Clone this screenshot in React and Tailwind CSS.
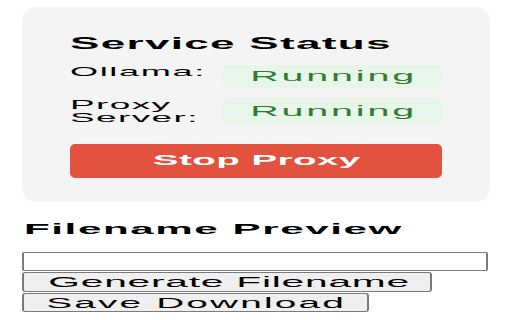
export default function App() {
  return (
    <div className="w-[512px] h-[320px] overflow-hidden bg-white text-black font-['Liberation_Sans',Arial,sans-serif]">
      <div className="mx-[22px] mt-[7px] h-[195px] rounded-[14px] bg-[#f4f4f4] pl-[48px] pr-[48px] pt-[27px]">
        <div className="text-[16px] font-bold leading-[20px] mb-[11px]">
          <span className="inline-block origin-left scale-x-[2.75] tracking-[0.48px] whitespace-nowrap">Service Status</span>
        </div>
        <div className="grid grid-cols-[152px_1fr] gap-y-[10px]">
          <div className="text-[13px] leading-[13px]">
            <span className="inline-block origin-left scale-x-[2.78] tracking-[0.58px] whitespace-nowrap">Ollama:</span>
          </div>
          <div className="flex items-center justify-center rounded-[5px] bg-[#e8f5e9] py-[4px] pl-[3px] text-[14px] leading-[15px] text-[#2e7d32]">
            <span className="inline-block origin-center scale-x-[2.82] tracking-[1px] whitespace-nowrap">Running</span>
          </div>
          <div className="text-[13px] leading-[13px]">
            <span className="inline-block origin-left scale-x-[2.84] tracking-[0.5px] whitespace-nowrap">
              Proxy
              <br />
              Server:
            </span>
          </div>
          <div className="flex items-center justify-center rounded-[5px] bg-[#e8f5e9] py-[4px] pl-[3px] text-[14px] leading-[15px] text-[#2e7d32]">
            <span className="inline-block origin-center scale-x-[2.82] tracking-[1px] whitespace-nowrap">Running</span>
          </div>
        </div>
        <button className="mt-[20px] flex h-[34px] w-full items-center justify-center rounded-[5px] bg-[#e2523f] pb-[2px] pl-[1px] text-[14px] font-bold text-white">
          <span className="inline-block origin-center scale-x-[2.75] tracking-[0.17px] whitespace-nowrap">Stop Proxy</span>
        </button>
      </div>

      <div className="mt-[18px] pl-[24px] text-[15px] font-bold leading-[18px]">
        <span className="inline-block origin-left scale-x-[2.81] tracking-[0.56px] whitespace-nowrap">Filename Preview</span>
      </div>

      <div className="ml-[22px] mt-[14px] flex flex-col items-start gap-[1px]">
        <input
          type="text"
          className="block h-[19px] w-[466px] rounded-[2px] border-x-2 border-y border-[#7a7a7a] bg-white"
        />
        <button className="flex h-[20px] w-[410px] items-center justify-center rounded-[3px] border-x-2 border-y border-[#7a7a7a] bg-[#efefef] pl-[5px] text-[14px] leading-[16px] text-black">
          <span className="inline-block origin-center scale-x-[2.91] tracking-[0.26px] whitespace-nowrap">Generate Filename</span>
        </button>
        <button className="flex h-[19px] w-[347px] items-center justify-center rounded-[3px] border-x-2 border-y border-[#7a7a7a] bg-[#efefef] pl-[2px] text-[14px] leading-[16px] text-black">
          <span className="inline-block origin-center scale-x-[2.77] tracking-[0.78px] whitespace-nowrap">Save Download</span>
        </button>
      </div>
    </div>
  );
}
